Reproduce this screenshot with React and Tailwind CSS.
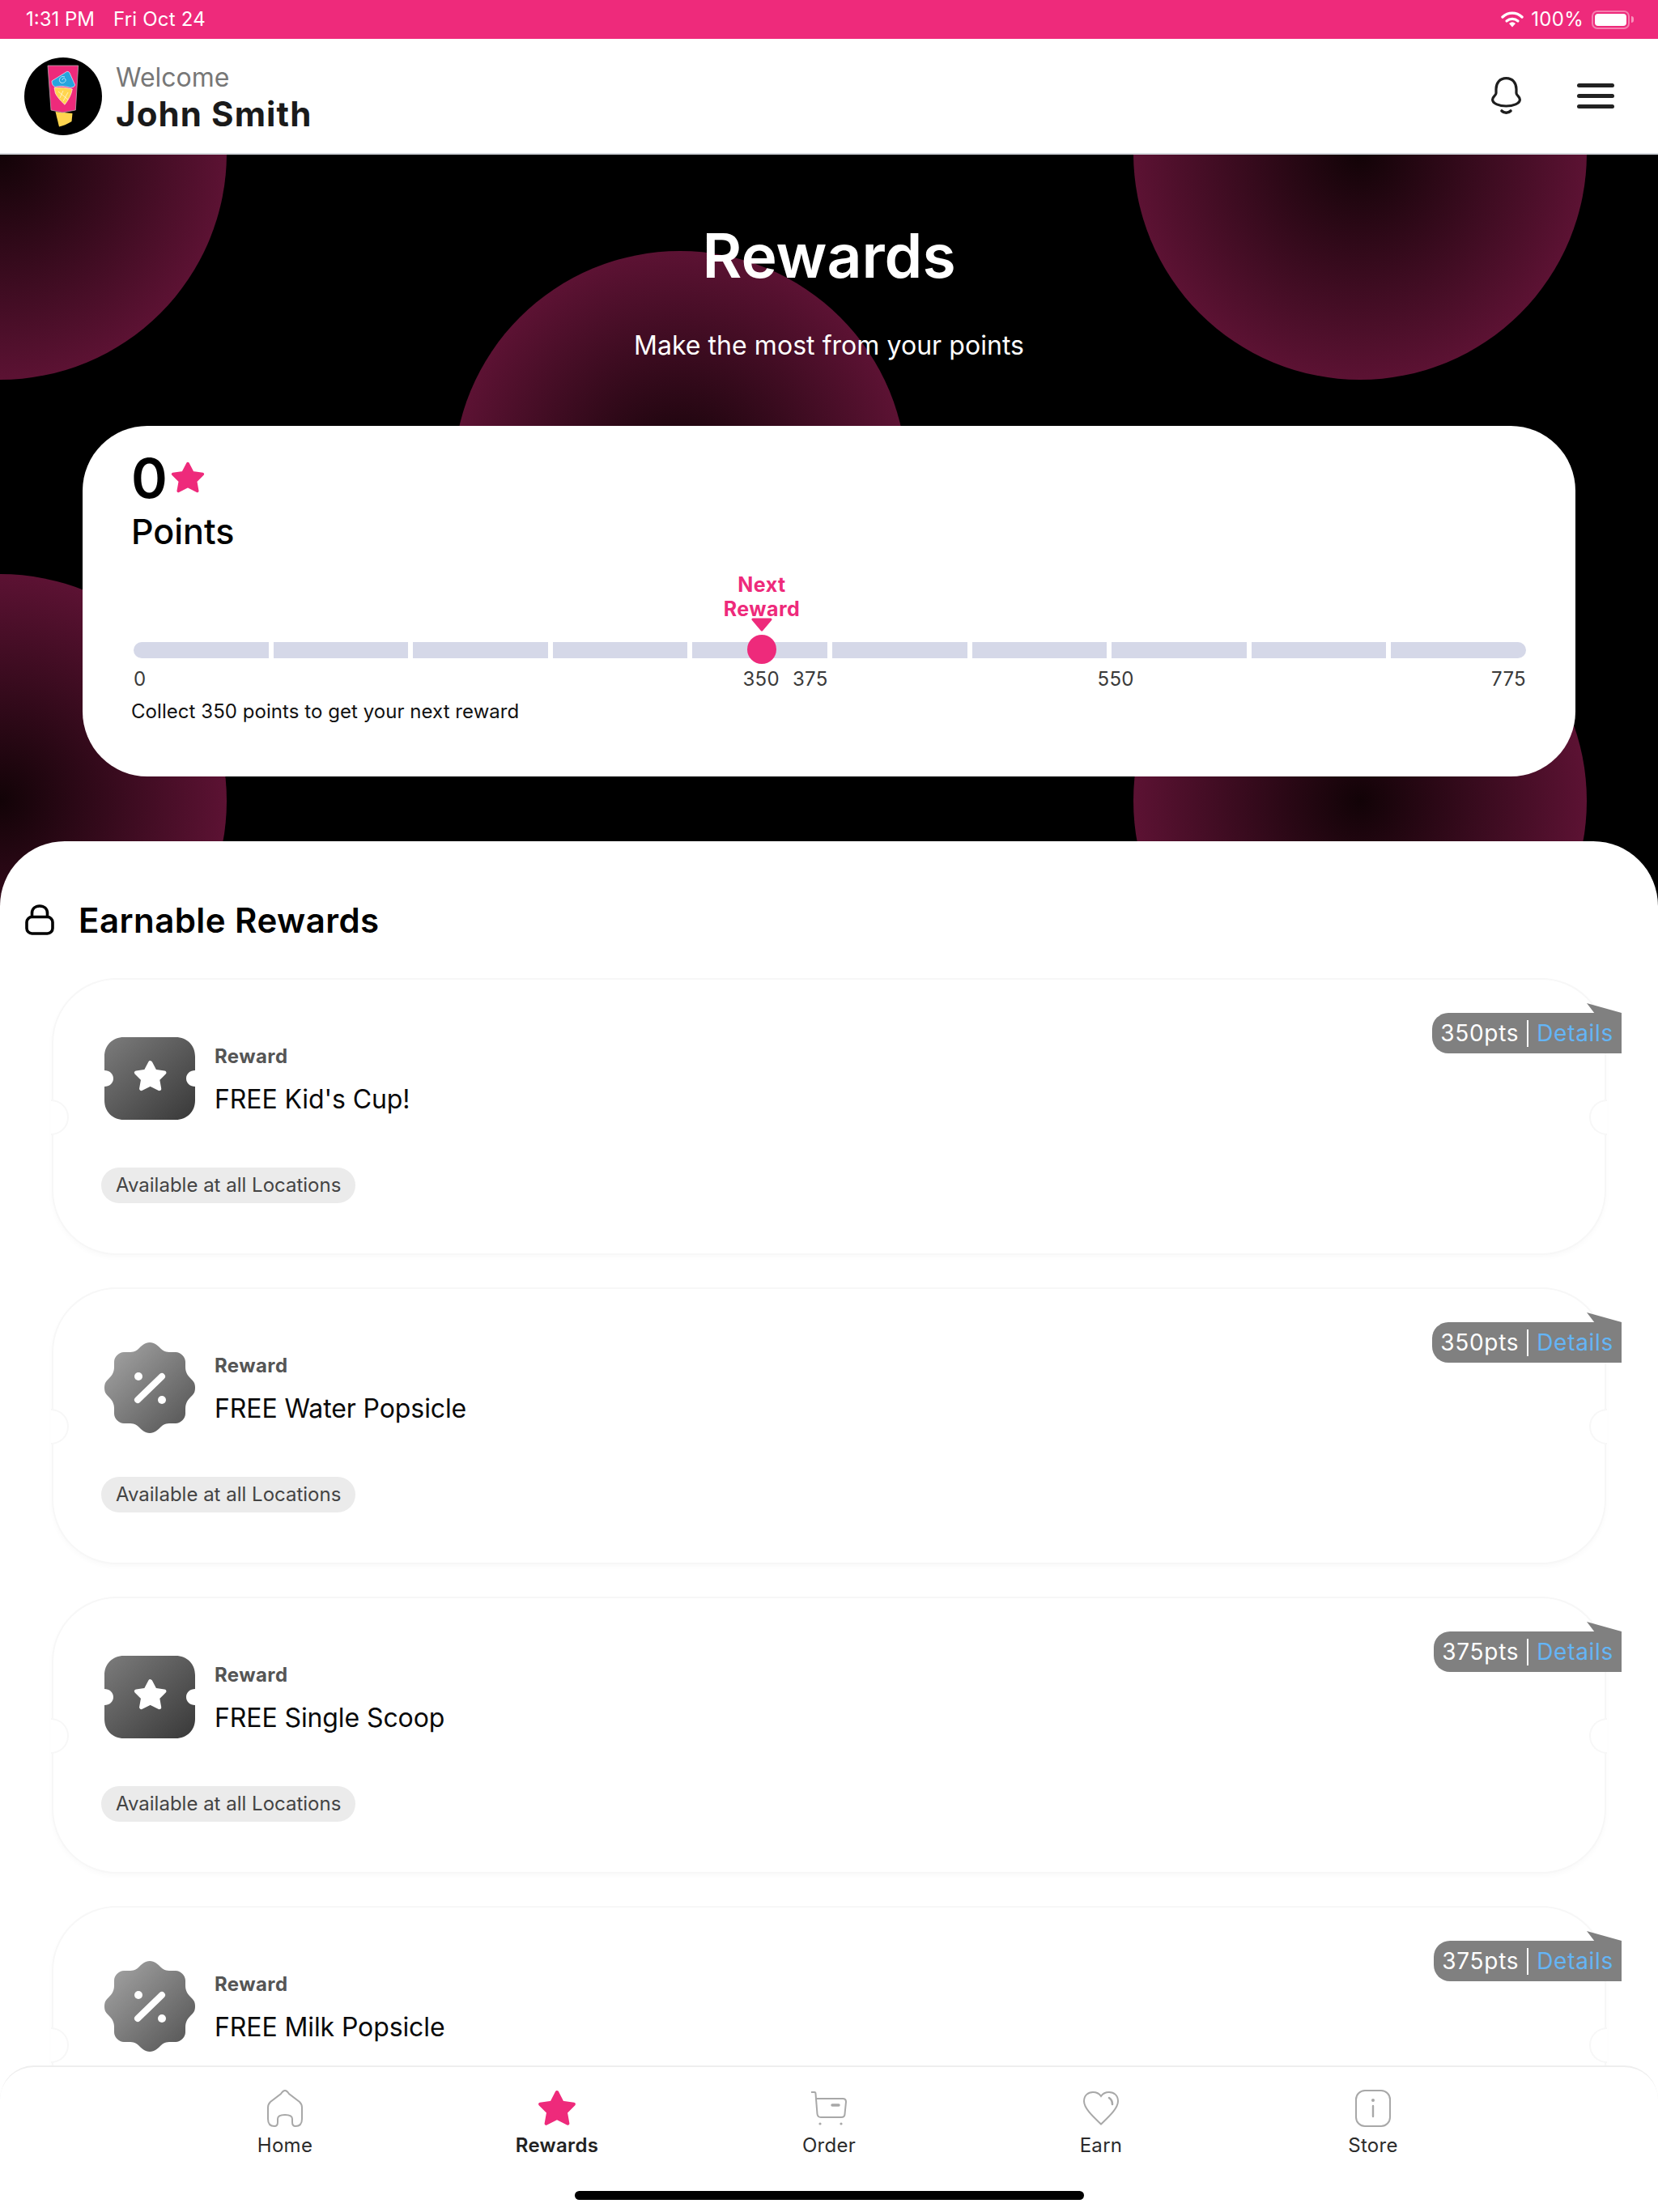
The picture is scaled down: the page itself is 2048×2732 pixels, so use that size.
import React from 'react';

const STAR = 'M12 2 L15.2 8.4 L22 9.4 L17.2 14.4 L18.4 21.4 L12 18 L5.6 21.4 L6.8 14.4 L2 9.4 L8.8 8.4 Z';

function Star({ className, fill = '#ee2a7b' }) {
  return (
    <svg className={className} viewBox="0 0 24 24" preserveAspectRatio="none">
      <path d={STAR} fill={fill} stroke={fill} strokeWidth="2" strokeLinejoin="round" />
    </svg>
  );
}

function Logo() {
  return (
    <svg className="w-[96px] h-[96px] shrink-0" viewBox="0 0 96 96">
      <circle cx="48" cy="48" r="48" fill="#000" />
      <path d="M38.5 67 L59.5 69 L58.5 79 Q50 84 43 85.5 Z" fill="#ffd54f" />
      <path d="M29 10 L66.7 10 L63.3 65 L47 68 L33 65 Z" fill="#ee2a7b" stroke="#b9a3ad" strokeWidth="0.8" />
      <path d="M34 29 L52.7 17.3 Q55 17 56 19 L62.7 34 Q62 37 57.3 37.3 Q46 34 38.3 36.3 Q34 35 34 29 Z" fill="#27a5de" stroke="#fff" strokeWidth="0.6" />
      <path d="M50 24 C45 22 42 27 44 30 C46 33 52 31 51 27 C50 25 47 25 47 28" fill="none" stroke="#bfe6f7" strokeWidth="1" />
      <path d="M37 37.3 Q48 36 59.3 39 Q58 48 50 58.3 Q41 50 38.3 44 Z" fill="#ffd54f" stroke="#fff" strokeWidth="0.6" />
      <path d="M42 42 L54 52 M48 41 L44 50 M54 43 L48 54" stroke="#fff" strokeWidth="0.6" fill="none" />
    </svg>
  );
}

function StatusBar() {
  return (
    <div className="h-[48px] bg-[#ee2a7b] flex items-center pl-[32px] pr-[30px] text-white text-[24px] shrink-0">
      <span>1:31 PM</span>
      <span className="ml-[23px] tracking-[0.2px]">Fri Oct 24</span>
      <svg className="ml-auto w-[28px] h-[20px]" viewBox="0 0 28 20">
        <path d="M2 7 C9 0.5 19 0.5 26 7" fill="none" stroke="#fff" strokeWidth="3.4" strokeLinecap="round" />
        <path d="M7 12 C11 8.5 17 8.5 21 12" fill="none" stroke="#fff" strokeWidth="3.2" strokeLinecap="round" />
        <path d="M10 15 Q14 11.5 18 15 L14 19.5 Z" fill="#fff" />
      </svg>
      <span className="ml-[9px] tracking-[0.3px]">100%</span>
      <div className="ml-[10px] w-[47px] h-[23px] rounded-[7px] border-2 border-white/40 p-[2px] flex">
        <div className="flex-1 bg-white rounded-[4px]" />
      </div>
      <div className="w-[3px] h-[8px] bg-white/50 rounded-r-full ml-[2px]" />
    </div>
  );
}

function Header() {
  return (
    <div className="h-[143px] bg-white flex items-center pl-[30px] border-b-2 border-[#d6dadf] shrink-0">
      <Logo />
      <div className="ml-[17px] flex flex-col">
        <span className="text-[32px] leading-[44px] text-[#777]">Welcome</span>
        <span className="text-[42px] leading-[46px] font-bold text-[#1a1a1a] tracking-[1.1px]">John Smith</span>
      </div>
      <svg className="ml-auto w-[37px] h-[47px]" viewBox="0 0 37 47" fill="none" stroke="#1e1e1e" strokeWidth="3.2" strokeLinecap="round">
        <path d="M18.5 1.6 C10 1.6 6 8 6 15 V20 C6 23 1.6 24 1.6 28 C1.6 33 10 36 18.5 36 C27 36 35.4 33 35.4 28 C35.4 24 31 23 31 20 V15 C31 8 27 1.6 18.5 1.6 Z" />
        <path d="M13 42 C16 45 21 45 24 42" strokeWidth="3.6" />
      </svg>
      <div className="ml-[69px] mr-[54px] w-[46px] flex flex-col gap-[8px]">
        <div className="h-[5px] rounded-full bg-[#222]" />
        <div className="h-[5px] rounded-full bg-[#222]" />
        <div className="h-[5px] rounded-full bg-[#222]" />
      </div>
    </div>
  );
}

function Blobs() {
  const cls = 'absolute w-[560px] h-[560px] rounded-full bg-[radial-gradient(circle_closest-side,#120307_0%,#5c1233_100%)]';
  return (
    <>
      <div className={`${cls} left-[-280px] top-[-282px]`} />
      <div className={`${cls} left-[1400px] top-[-282px]`} />
      <div className={`${cls} left-[560px] top-[119px]`} />
      <div className={`${cls} left-[-280px] top-[518px]`} />
      <div className={`${cls} left-[1400px] top-[518px]`} />
    </>
  );
}

function PointsCard() {
  const segments = [0, 1, 2, 3, 4, 5, 6, 7, 8, 9];
  return (
    <div className="relative z-10 mx-[102px] mt-[79px] h-[433px] rounded-[80px] bg-white pl-[61px] pr-[61px] pt-[26px]">
      <div className="flex items-center h-[76px] ml-[-1px]">
        <span className="text-[68px] font-semibold leading-none text-black">0</span>
        <Star className="ml-[3px] w-[44px] h-[42px]" />
      </div>
      <div className="h-[56px] flex items-center text-[43px] font-medium text-black ml-[-1px]">Points</div>
      <div className="relative ml-[2px] mt-[109px]">
        <div className="grid grid-cols-10 gap-[6px]">
          {segments.map((s) => (
            <div key={s} className={'h-[20px] bg-[#d5d8e8] ' + (s === 0 ? 'rounded-l-full' : s === 9 ? 'rounded-r-full' : '')} />
          ))}
        </div>
        <div className="absolute left-[758px] top-[-9px] w-[36px] h-[36px] rounded-full bg-[#ee2a7b]" />
        <div className="absolute left-[696px] top-[-86px] w-[160px] flex flex-col items-center">
          <span className="text-[25px] leading-[30px] font-bold text-[#ee2a7b] text-center tracking-[0.5px]">Next<br />Reward</span>
          <svg className="w-[28px] h-[17px] mt-[-4px]" viewBox="0 0 28 17">
            <path d="M3 2 H25 L14 15 Z" fill="#ee2a7b" stroke="#ee2a7b" strokeWidth="3" strokeLinejoin="round" />
          </svg>
        </div>
      </div>
      <div className="ml-[2px] mt-[13px] flex text-[24px] leading-[26px] text-[#3a3a3a] tracking-[0.3px]">
        <span>0</span>
        <span className="ml-[737px]">350</span>
        <span className="ml-[16px]">375</span>
        <span className="ml-[333px]">550</span>
        <span className="ml-auto">775</span>
      </div>
      <div className="mt-[12px] ml-[-1px] text-[24px] leading-[30px] text-[#111] tracking-[0.05px]">Collect 350 points to get your next reward</div>
    </div>
  );
}

function TicketIcon() {
  return (
    <svg className="w-[112px] h-[112px] shrink-0" viewBox="0 -5 112 112">
      <defs>
        <linearGradient id="ticketGrad" x1="0" y1="0" x2="1" y2="1">
          <stop offset="0%" stopColor="#7c7c7c" />
          <stop offset="100%" stopColor="#383838" />
        </linearGradient>
      </defs>
      <path d="M24 0 H88 C102 0 112 10 112 24 V41 C106 41 101 45 101 51 C101 57 106 61 112 61 V78 C112 92 102 102 88 102 H24 C10 102 0 92 0 78 V61 C6 61 11 57 11 51 C11 45 6 41 0 41 V24 C0 10 10 0 24 0 Z" fill="url(#ticketGrad)" />
      <g transform="translate(36 30) scale(1.72 1.65)">
        <path d={STAR} fill="#fff" stroke="#fff" strokeWidth="3" strokeLinejoin="round" transform="translate(0 -1)" />
      </g>
    </svg>
  );
}

function PercentIcon() {
  return (
    <svg className="w-[112px] h-[112px] shrink-0" viewBox="0 0 112 112">
      <defs>
        <linearGradient id="percentGrad" x1="0" y1="0" x2="1" y2="1">
          <stop offset="0%" stopColor="#a8a8a8" />
          <stop offset="100%" stopColor="#505050" />
        </linearGradient>
      </defs>
      <path d="M56 0 C62 0 66 4 70 8 C74 12 78 12 84 12 H88 C94 12 100 18 100 24 V30 C100 36 102 40 106 44 C110 48 112 50 112 56 C112 62 110 64 106 68 C102 72 100 76 100 82 V88 C100 94 94 100 88 100 H84 C78 100 74 100 70 104 C66 108 62 112 56 112 C50 112 46 108 42 104 C38 100 34 100 28 100 H24 C18 100 12 94 12 88 V82 C12 76 10 72 6 68 C2 64 0 62 0 56 C0 50 2 48 6 44 C10 40 12 36 12 30 V24 C12 18 18 12 24 12 H28 C34 12 38 12 42 8 C46 4 50 0 56 0 Z" fill="url(#percentGrad)" />
      <path d="M41 71 L71 42" stroke="#fff" strokeWidth="8" strokeLinecap="round" />
      <circle cx="42" cy="42" r="5" fill="#fff" />
      <circle cx="71" cy="71" r="5" fill="#fff" />
    </svg>
  );
}

function RewardCard({ pts, name, icon }) {
  return (
    <div className="relative shrink-0 h-[342px] rounded-[80px] border-2 border-[#f7f7f7] bg-white shadow-[0_3px_6px_rgba(0,0,0,0.025)] pl-[59px] pt-[66px]">
      <div className="absolute left-[-3px] top-[148px] w-[22px] h-[44px] rounded-r-full bg-white border-2 border-l-0 border-[#f7f7f7]" />
      <div className="absolute right-[-3px] top-[148px] w-[22px] h-[44px] rounded-l-full bg-white border-2 border-r-0 border-[#f7f7f7]" />
      <div className="flex items-center ml-[4px]">
        {icon === 'ticket' ? <TicketIcon /> : <PercentIcon />}
        <div className="ml-[24px] flex flex-col mt-[7px]">
          <span className="text-[24px] leading-[30px] font-bold text-[#555] tracking-[0.4px]">Reward</span>
          <span className="mt-[15px] text-[32px] leading-[46px] text-[#0a0a0a] tracking-[-0.1px]">{name}</span>
        </div>
      </div>
      <div className="mt-[54px] inline-flex items-center h-[44px] px-[18px] rounded-full bg-[#ebebeb] text-[24px] text-[#444]">
        Available at all Locations
      </div>
      <div className="absolute right-[-21px] top-[41px] h-[50px] rounded-l-[20px] bg-[#808080] flex items-center pl-[10px] pr-[10px] text-[28px] leading-none tracking-[0.7px]">
        <svg className="absolute right-0 top-[-12px] w-[43px] h-[13px]" viewBox="0 0 43 13">
          <path d="M0 0 L43 12 V13 H10 Z" fill="#808080" />
        </svg>
        <span className="text-white">{pts}pts</span>
        <div className="mx-[10px] w-[2px] h-[33px] bg-white" />
        <span className="text-[#64b5f6]">Details</span>
      </div>
    </div>
  );
}

function Sheet() {
  const rewards = [
    { pts: 350, name: "FREE Kid's Cup!", icon: 'ticket' },
    { pts: 350, name: 'FREE Water Popsicle', icon: 'percent' },
    { pts: 375, name: 'FREE Single Scoop', icon: 'ticket' },
    { pts: 375, name: 'FREE Milk Popsicle', icon: 'percent' },
  ];
  return (
    <div className="relative z-10 mt-[80px] flex-1 min-h-0 overflow-hidden rounded-t-[80px] bg-white pt-[72px]">
      <div className="flex items-center h-[50px] pl-[31px]">
        <svg className="w-[36px] h-[38px]" viewBox="0 0 36 38" fill="none" stroke="#000" strokeWidth="3.6">
          <rect x="2" y="15.5" width="32" height="20.5" rx="6.5" />
          <path d="M8.5 15.5 V11 C8.5 5.5 12.5 2 18 2 C23.5 2 27.5 5.5 27.5 11 V15.5" />
        </svg>
        <span className="ml-[30px] text-[42px] font-semibold text-black tracking-[0.45px]">Earnable Rewards</span>
      </div>
      <div className="mt-[47px] mx-[64px] flex flex-col gap-[40px]">
        {rewards.map((r) => (
          <RewardCard key={r.name} {...r} />
        ))}
      </div>
    </div>
  );
}

function NavItem({ label, active, children }) {
  return (
    <div className="flex flex-col items-center">
      <div className="h-[46px] flex items-center justify-center">{children}</div>
      <span className={'mt-[8px] text-[24px] leading-[30px] tracking-[0.3px] ' + (active ? 'font-semibold text-[#222]' : 'text-[#2b2b2b]')}>{label}</span>
    </div>
  );
}

function BottomNav() {
  const line = { fill: 'none', stroke: '#a8a8a8', strokeWidth: 2 };
  return (
    <div className="relative z-20 h-[181px] shrink-0 flex flex-col bg-white rounded-t-[42px] border-t-2 border-[#eeeeee] pt-[28px]">
      <div className="grid grid-cols-5 mx-[184px]">
        <NavItem label="Home">
          <svg className="w-[44px] h-[46px]" viewBox="0 0 44 46" {...line}>
            <path d="M22 1 C20 1 19 2 17 5 L4 15 C2 17 1 19 1 22 V36 C1 42 4 45 9 45 C12 45 13 43 13 40 V36 C13 33 16 31 22 31 C28 31 31 33 31 36 V40 C31 43 32 45 35 45 C40 45 43 42 43 36 V22 C43 19 42 17 40 15 L27 5 C25 2 24 1 22 1 Z" />
          </svg>
        </NavItem>
        <NavItem label="Rewards" active>
          <Star className="w-[50px] h-[48px]" />
        </NavItem>
        <NavItem label="Order">
          <svg className="w-[44px] h-[42px]" viewBox="0 0 44 42" {...line}>
            <path d="M0 1 H4 Q5.5 1 5.5 3 L7.5 28 Q8 32 12 32 H37 Q41.5 32 41.5 28 L43 13 Q43 9 39 9 H6" />
            <path d="M26 17 H34" strokeWidth="3.5" strokeLinecap="round" />
            <circle cx="11" cy="40" r="1.6" fill="#a8a8a8" stroke="none" />
            <circle cx="37" cy="40" r="1.6" fill="#a8a8a8" stroke="none" />
          </svg>
        </NavItem>
        <NavItem label="Earn">
          <svg className="w-[44px] h-[42px]" viewBox="0 0 44 42" {...line}>
            <path d="M22 40.5 C12 31 1 21 1 12 C1 5 6 1 12 1 C16 1 20 3 22 6 C24 3 28 1 32 1 C38 1 43 5 43 12 C43 21 32 31 22 40.5 Z" />
            <path d="M32 8 C35 10 36 13 36 16" strokeWidth="2.6" strokeLinecap="round" />
          </svg>
        </NavItem>
        <NavItem label="Store">
          <svg className="w-[44px] h-[46px]" viewBox="0 0 44 46" {...line}>
            <rect x="1" y="1" width="42" height="44" rx="11" />
            <circle cx="22" cy="13" r="2" fill="#a8a8a8" stroke="none" />
            <path d="M22 20 V33" strokeWidth="2.4" strokeLinecap="round" />
          </svg>
        </NavItem>
      </div>
      <div className="mt-auto mb-[15px] mx-auto w-[629px] h-[11px] rounded-full bg-black" />
    </div>
  );
}

export default function App() {
  return (
    <div className="w-[2048px] h-[2732px] flex flex-col overflow-hidden bg-white font-['Inter',sans-serif]">
      <StatusBar />
      <Header />
      <div className="relative flex-1 min-h-0 flex flex-col bg-black overflow-hidden">
        <Blobs />
        <div className="relative z-10 pt-[80px] flex flex-col items-center text-white">
          <h1 className="text-[75px] leading-[90px] font-semibold">Rewards</h1>
          <p className="mt-[46px] text-[32px] leading-[40px] tracking-[0.05px]">Make the most from your points</p>
        </div>
        <PointsCard />
        <Sheet />
      </div>
      <BottomNav />
    </div>
  );
}
